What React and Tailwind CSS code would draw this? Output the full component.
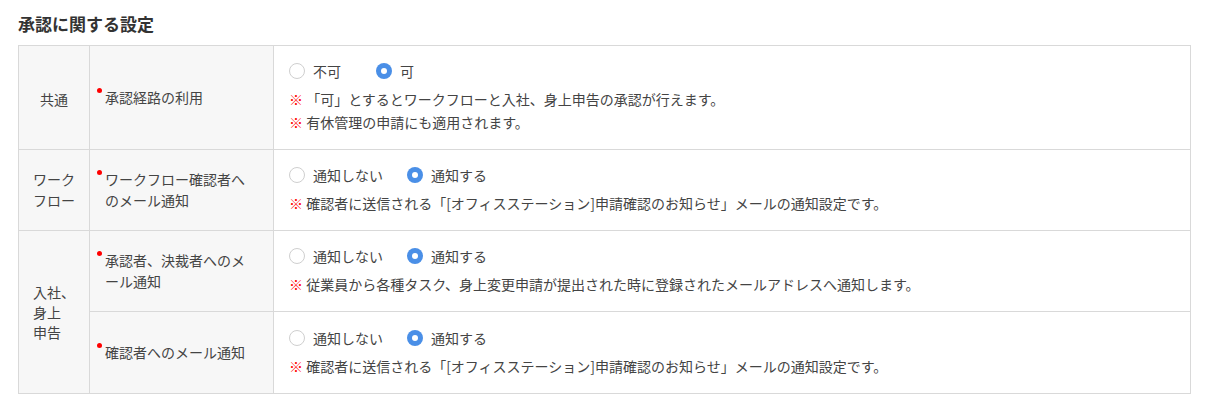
import React from "react";

const FONT = { fontFamily: '"Noto Sans CJK JP", "Noto Sans", sans-serif' };

function Radio({ checked, label, width }) {
  return (
    <div className="flex items-center h-5" style={width ? { width } : undefined}>
      {checked ? (
        <span className="w-4 h-4 rounded-full bg-[#4a8fe7] flex items-center justify-center shrink-0">
          <span className="w-[6px] h-[6px] rounded-full bg-white" />
        </span>
      ) : (
        <span className="w-4 h-4 rounded-full border border-[#cfcfcf] bg-white shrink-0" />
      )}
      <span className="ml-[8px] text-[14px] leading-5 text-[#444]">{label}</span>
    </div>
  );
}

function Note({ children }) {
  return (
    <div className="h-[23px] text-[14px] leading-[23px] text-[#444] whitespace-nowrap">
      <span className="text-[#f00]">※</span> {children}
    </div>
  );
}

function Label({ children }) {
  return (
    <div className="flex items-start pl-[7px] pr-[18px]">
      <span className="w-[5px] h-[5px] rounded-full bg-[#f00] mt-[1px] shrink-0" />
      <span className="ml-[3px] text-[14px] leading-[21px] text-[#444]">{children}</span>
    </div>
  );
}

function Value({ options, notes, firstWidth }) {
  return (
    <div className="pl-[15px] pt-[15px] pb-[15px]">
      <div className="flex items-center">
        <Radio checked={false} label={options[0]} width={firstWidth} />
        <Radio checked={true} label={options[1]} />
      </div>
      <div className="mt-[7px]">
        {notes.map((n, i) => (
          <Note key={i}>{n}</Note>
        ))}
      </div>
    </div>
  );
}

function GroupCell({ lines, rowSpan, leading }) {
  return (
    <td
      rowSpan={rowSpan}
      className="border border-[#d9d9d9] bg-[#f7f7f7] px-[14px] text-center align-middle"
    >
      <span className="inline-block text-left text-[14px] text-[#444]">
        {lines.map((l, i) => (
          <span key={i} className={"block whitespace-nowrap " + (leading === 21 ? "leading-[21px]" : "leading-5")}>
            {l}
          </span>
        ))}
      </span>
    </td>
  );
}

export default function App() {
  const notify = ["通知しない", "通知する"];
  const confirmNote =
    "確認者に送信される「[オフィスステーション]申請確認のお知らせ」メールの通知設定です。";
  return (
    <div className="bg-white w-[1210px] h-[402px] pl-[18px] pr-[19px]" style={FONT}>
      <h2 className="pt-[12px] text-[17px] leading-6 font-bold text-[#333] mb-[9px]">
        承認に関する設定
      </h2>
      <table className="w-full table-fixed border-collapse border border-[#d9d9d9]">
        <colgroup>
          <col className="w-[71px]" />
          <col className="w-[184px]" />
          <col />
        </colgroup>
        <tbody>
          <tr>
            <GroupCell lines={["共通"]} />
            <td className="border border-[#d9d9d9] bg-[#f7f7f7] align-middle">
              <Label>承認経路の利用</Label>
            </td>
            <td className="border border-[#d9d9d9] bg-white align-middle">
              <Value
                options={["不可", "可"]}
                firstWidth={87}
                notes={[
                  "「可」とするとワークフローと入社、身上申告の承認が行えます。",
                  "有休管理の申請にも適用されます。",
                ]}
              />
            </td>
          </tr>
          <tr>
            <GroupCell lines={["ワーク", "フロー"]} leading={21} />
            <td className="border border-[#d9d9d9] bg-[#f7f7f7] align-middle">
              <Label>ワークフロー確認者へのメール通知</Label>
            </td>
            <td className="border border-[#d9d9d9] bg-white align-middle">
              <Value options={notify} firstWidth={118} notes={[confirmNote]} />
            </td>
          </tr>
          <tr>
            <GroupCell rowSpan={2} lines={["入社、", "身上", "申告"]} />
            <td className="border border-[#d9d9d9] bg-[#f7f7f7] align-middle">
              <Label>承認者、決裁者へのメール通知</Label>
            </td>
            <td className="border border-[#d9d9d9] bg-white align-middle">
              <Value
                options={notify}
                firstWidth={118}
                notes={["従業員から各種タスク、身上変更申請が提出された時に登録されたメールアドレスへ通知します。"]}
              />
            </td>
          </tr>
          <tr className="h-[82px]">
            <td className="border border-[#d9d9d9] bg-[#f7f7f7] align-middle">
              <Label>確認者へのメール通知</Label>
            </td>
            <td className="border border-[#d9d9d9] bg-white align-middle">
              <Value options={notify} firstWidth={118} notes={[confirmNote]} />
            </td>
          </tr>
        </tbody>
      </table>
    </div>
  );
}
